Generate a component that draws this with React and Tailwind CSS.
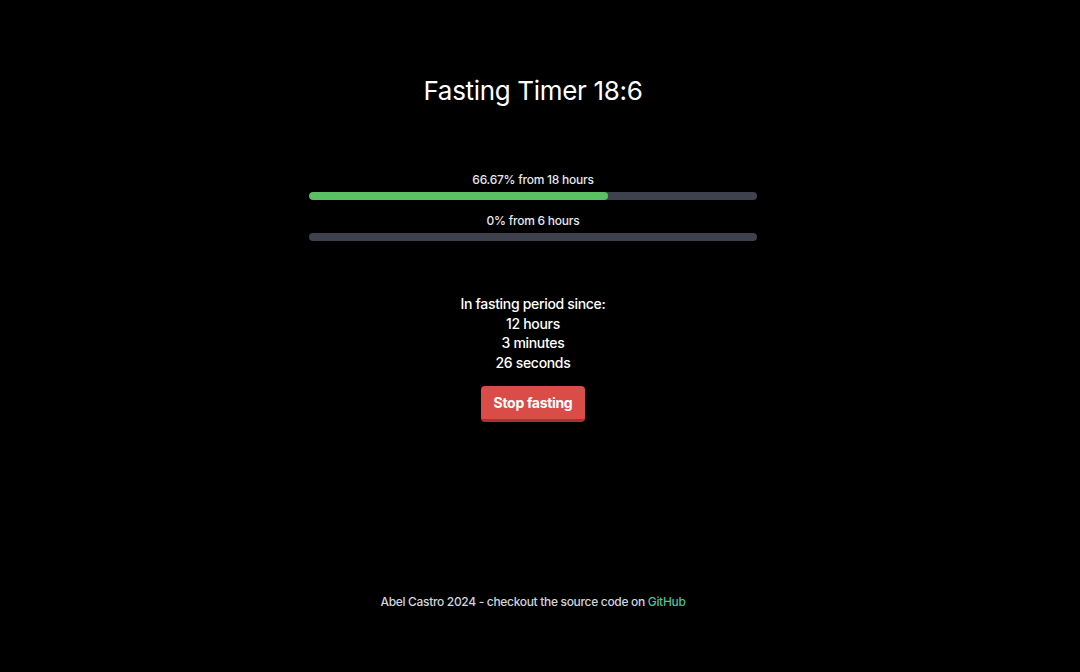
import React from 'react'

function ProgressBar({ label, percent }) {
  return (
    <div className="w-full">
      <p className="text-center text-[12px] leading-[16px] font-medium tracking-[-0.02em] text-gray-200">{label}</p>
      <div className="mt-[4px] h-[8px] w-full rounded-full bg-[#3d424e] overflow-hidden">
        <div className="h-full rounded-full bg-[#5bbf63]" style={{ width: `${percent}%` }}></div>
      </div>
    </div>
  )
}

export default function App() {
  return (
    <div className="min-h-[672px] w-full bg-black text-white flex flex-col items-center pr-[14px] font-['Inter',sans-serif] tracking-[-0.02em]">
      {/* Title */}
      <h1 className="mt-[74px] text-[26px] leading-[34px] font-normal text-white">Fasting Timer 18:6</h1>

      {/* Progress */}
      <div className="mt-[64px] w-[448px] flex flex-col gap-[13px]">
        <ProgressBar label="66.67% from 18 hours" percent={66.67} />
        <ProgressBar label="0% from 6 hours" percent={0} />
      </div>

      {/* Status */}
      <div className="mt-[53px] flex flex-col items-center text-[14px] leading-[19.5px] font-medium text-white">
        <p>In fasting period since:</p>
        <p>12 hours</p>
        <p>3 minutes</p>
        <p>26 seconds</p>
      </div>

      <button className="mt-[14px] h-[36px] px-[13px] rounded-[4px] bg-[#d94c48] border-b-[3px] border-[#a8332f] text-[14px] font-bold text-white">
        Stop fasting
      </button>

      {/* Footer */}
      <footer className="mt-[171px] text-[12px] font-medium text-gray-300">
        Abel Castro 2024 - checkout the source code on{' '}
        <a href="#" className="text-[#4fbf98]">GitHub</a>
      </footer>
    </div>
  )
}
